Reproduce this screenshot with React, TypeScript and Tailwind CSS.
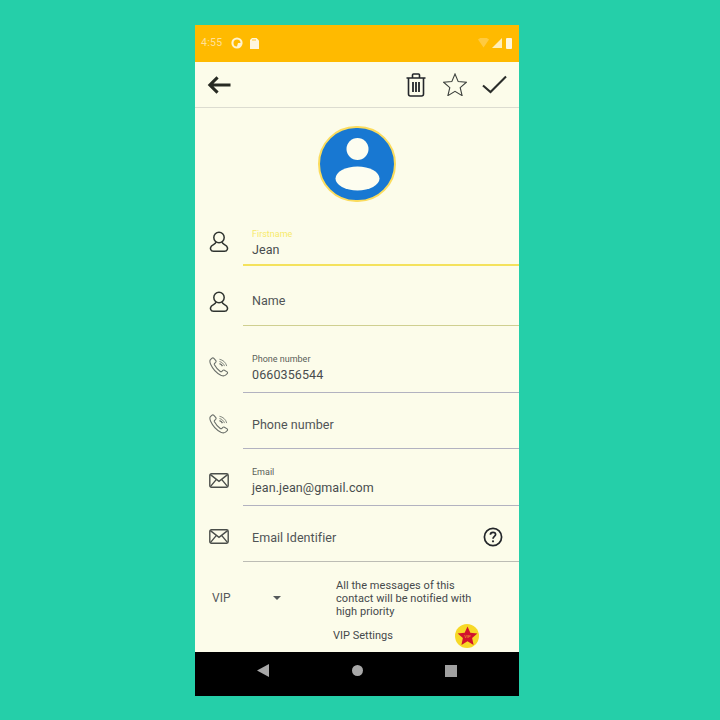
import React from "react";

const Person = () => (
  <svg width="20" height="24" viewBox="0 0 20 24" fill="none" stroke="#2f3430" strokeWidth="1.5">
    <circle cx="10" cy="7.5" r="5.2" />
    <path d="M7 12.2C6.6 14 3.6 14.6 2.3 16.2C0.6 18.4 1.6 21.3 4.5 21.3H15.5C18.4 21.3 19.4 18.4 17.7 16.2C16.4 14.6 13.4 14 13 12.2" />
  </svg>
);

const Phone = () => (
  <svg width="20" height="20" viewBox="0 0 22 22" fill="none" stroke="#6a6f6a" strokeWidth="1.2">
    <path d="M3 1.6L1.4 3.2C0.6 4.4 1 6.2 1.8 8C3.6 12 8 17.6 13 20C15 20.9 17 20.9 18.2 20L20 18.4C20.6 17.7 20.6 17 19.9 16.4L17 14.6C16.3 14.2 15.7 14.3 15.2 14.8L14 16C13.5 16.4 13 16.4 12.4 16C10 14.4 7.4 11.2 6 8.6C5.7 8 5.8 7.5 6.2 7L7.4 5.8C7.9 5.2 7.9 4.6 7.5 4L5.4 1.6C4.7 0.9 3.8 0.9 3 1.6Z" />
    <path d="M11.5 2.5C15.5 3.2 18.5 6 19.5 10" strokeWidth="0.9" />
    <path d="M11.5 5C14.2 5.6 16.2 7.4 17 10" strokeWidth="0.9" />
    <path d="M11.5 7.4C13 7.8 14.2 8.8 14.8 10" strokeWidth="1.4" />
  </svg>
);

const Mail = () => (
  <svg width="20" height="15" viewBox="0 0 20 15" fill="none" stroke="#4a4e4a" strokeWidth="1.4">
    <rect x="0.8" y="0.8" width="18.4" height="13.4" rx="1.6" />
    <path d="M1.4 1.6L10 8.4L18.6 1.6M1.4 13.6L7.4 6.4M18.6 13.6L12.6 6.4" />
  </svg>
);

function Field({
  icon,
  iconPad,
  textPad,
  label,
  value,
  placeholder,
  height,
  line,
  labelClass = "text-[#5a5e58]",
  right,
  lineClass = "h-px",
}: {
  icon: React.ReactNode;
  iconPad: string;
  textPad: string;
  label?: string;
  value?: string;
  placeholder?: string;
  height: string;
  line: string;
  labelClass?: string;
  right?: React.ReactNode;
  lineClass?: string;
}) {
  return (
    <div className={`flex ${height}`}>
      <div className={`w-[48px] flex justify-center items-center ${iconPad}`}>{icon}</div>
      <div className="flex-1 flex flex-col">
        <div className="flex-1 flex items-center pl-[9px] pr-[16px]">
          <div className={`flex-1 ${textPad}`}>
            {label && <div className={`text-[9px] leading-[11px] ${labelClass}`}>{label}</div>}
            {value && <div className="text-[12.5px] leading-[16px] mt-[2px] text-[#484c4e] tracking-[0.1px]">{value}</div>}
            {placeholder && <div className="text-[12.5px] leading-[16px] text-[#505456] tracking-[0.05px]">{placeholder}</div>}
          </div>
          {right}
        </div>
        <div className={`${lineClass} ${line}`} />
      </div>
    </div>
  );
}

export default function App() {
  return (
    <div className="w-[720px] h-[720px] bg-[#25cfa9] pt-[25px] pl-[195px] font-['Roboto',sans-serif]">
      <div className="w-[324px] h-[671px] flex flex-col bg-[#fcfcea]">
        <div className="h-[37px] bg-[#ffba00] flex items-center justify-between pl-[6px] pr-[7px] pb-[1px] shrink-0">
          <div className="flex items-center">
            <span className="text-[10.5px] text-[#ffe09a] tracking-[0.3px] leading-none">4:55</span>
            <svg className="ml-[9px]" width="12" height="12" viewBox="0 0 12 12">
              <circle cx="6" cy="6" r="5.6" fill="#fff3d0" />
              <path d="M6 2.5A3.5 3.5 0 0 0 6 9.5L7 6H9.5A3.5 3.5 0 0 0 6 2.5Z" fill="#ffba00" />
            </svg>
            <svg className="ml-[7px]" width="9" height="11" viewBox="0 0 9 11">
              <path d="M2 0H6.5L9 2.5V11H0V2Z" fill="#fff6dd" />
              <path d="M3 1V3M5 1V3" stroke="#ffba00" strokeWidth="0.8" />
            </svg>
          </div>
          <div className="flex items-center gap-[3px]">
            <svg width="11" height="10" viewBox="0 0 11 10">
              <path d="M0 1.5A8 8 0 0 1 11 1.5L5.5 9.5Z" fill="#ffca40" />
            </svg>
            <svg width="10" height="10" viewBox="0 0 10 10">
              <path d="M10 0V10H0Z" fill="#ffeeb8" />
            </svg>
            <div className="w-[6px] h-[11px] bg-[#fff6dd] rounded-[1px] ml-[1px]" />
          </div>
        </div>

        <div className="h-[45px] flex items-center pl-[12px] pr-[12px] border-b border-[#dcdcd0] box-content shrink-0">
          <svg width="24" height="20" viewBox="0 0 25 20" fill="none" stroke="#272a22" strokeWidth="3.2">
            <path d="M24.5 10H3M11 2L3 10L11 18" />
          </svg>
          <div className="flex-1" />
          <svg width="20" height="24" viewBox="0 0 20 24" fill="none" stroke="#23262a" strokeWidth="1.6">
            <path d="M0.5 5H19.5M2.5 5V21C2.5 22.3 3.3 23 4.5 23H15.5C16.7 23 17.5 22.3 17.5 21V5M6.5 4.5V2C6.5 1.3 7 1 7.5 1H12.5C13 1 13.5 1.3 13.5 2V4.5" />
            <path d="M7 9V19M10 9V19M13 9V19" strokeWidth="1.8" />
          </svg>
          <svg className="ml-[17px]" width="24" height="23" viewBox="0 0 24 23" fill="none" stroke="#3c403c" strokeWidth="1.1">
            <path d="M12 1L15.2 8.6L23.4 9.2L17.2 14.6L19.1 22.6L12 18.3L4.9 22.6L6.8 14.6L0.6 9.2L8.8 8.6Z" />
          </svg>
          <svg className="ml-[15px]" width="25" height="19" viewBox="0 0 25 19" fill="none" stroke="#2a2d2a" strokeWidth="2.1">
            <path d="M1 10.5L8.5 17L24 1.5" />
          </svg>
        </div>

        <div className="h-[100px] flex justify-center pt-[18px] shrink-0">
          <div className="w-[78px] h-[76px] rounded-full bg-[#1878d2] border-[2.5px] border-[#fbdc5e] flex items-center justify-center overflow-hidden">
            <svg width="73" height="71" viewBox="0 0 73 71">
              <circle cx="36.5" cy="20" r="11" fill="#fdfdf0" />
              <ellipse cx="36.5" cy="49.5" rx="22" ry="12" fill="#fdfdf0" />
            </svg>
          </div>
        </div>

        <Field icon={<Person />} iconPad="pt-[10px]" textPad="pt-[14px]" label="Firstname" value="Jean" height="h-[58px]" line="bg-[#f4e25c]" lineClass="h-[2px]" labelClass="text-[#f7ea6a]" />
        <Field icon={<Person />} iconPad="pt-[12px]" textPad="pt-[12px]" placeholder="Name" height="h-[60px]" line="bg-[#cfcf90]" lineClass="h-[1.5px]" />
        <Field icon={<Phone />} iconPad="pt-[14px]" textPad="pt-[19px]" label="Phone number" value="0660356544" height="h-[67px]" line="bg-[#b2b2c0]" />
        <Field icon={<Phone />} iconPad="pt-[6px]" textPad="pt-[8px]" placeholder="Phone number" height="h-[56px]" line="bg-[#b2b2c0]" />
        <Field icon={<Mail />} iconPad="pt-[6px]" textPad="pt-[9px]" label="Email" value="jean.jean@gmail.com" height="h-[57px]" line="bg-[#b2b2c0]" />
        <Field
          icon={<Mail />}
          iconPad="pt-[4px]"
          textPad="pt-[8px]"
          placeholder="Email Identifier"
          height="h-[56px]"
          line="bg-[#bcbcb4]"
          right={
            <svg className="mt-[6px]" width="20" height="20" viewBox="0 0 20 20" fill="none">
              <circle cx="10" cy="10" r="8.6" stroke="#23262a" strokeWidth="1.7" />
              <path d="M7.4 7.8C7.4 6.2 8.6 5.4 10 5.4C11.5 5.4 12.6 6.3 12.6 7.6C12.6 9.4 10 9.6 10 11.8" stroke="#23262a" strokeWidth="1.7" />
              <circle cx="10" cy="14.3" r="1.1" fill="#23262a" />
            </svg>
          }
        />

        <div className="flex-1 flex flex-col min-h-0">
          <div className="flex items-center h-[62px] pt-[10px]">
            <div className="w-[48px] pl-[17px] text-[12px] text-[#54585a]">VIP</div>
            <div className="w-[93px] flex justify-start pl-[30px]">
              <div className="w-0 h-0 border-l-[4px] border-r-[4px] border-t-[4px] border-l-transparent border-r-transparent border-t-[#55595a]" />
            </div>
            <div className="w-[150px] text-[11px] leading-[13px] text-[#45494a] tracking-[0.05px]">
              All the messages of this<br />contact will be notified with<br />high priority
            </div>
          </div>
          <div className="flex-1 flex items-start relative">
            <div className="ml-[138px] mt-[5px] text-[11px] leading-[13px] text-[#45494a]">VIP Settings</div>
            <div className="absolute left-[260px] top-0 w-[24px] h-[24px] rounded-full bg-[#f7d927] flex items-center justify-center">
              <svg width="21" height="20" viewBox="0 0 20 19">
                <path d="M10 0.5L12.7 6.4L19.4 7.1L14.4 11.4L15.8 18L10 14.6L4.2 18L5.6 11.4L0.6 7.1L7.3 6.4Z" fill="#d2122d" />
                <text x="10" y="11.5" textAnchor="middle" fontSize="4" fill="#f2b02a" fontFamily="Roboto">VIP</text>
              </svg>
            </div>
          </div>
        </div>

        <div className="h-[44px] bg-black flex items-center pb-[7px] shrink-0">
          <svg className="ml-[62px]" width="12" height="13" viewBox="0 0 12 13">
            <path d="M12 0V13L0 6.5Z" fill="#a8a8a8" />
          </svg>
          <div className="ml-[83px] w-[11px] h-[11px] rounded-full bg-[#a8a8a8]" />
          <div className="ml-[82px] w-[12px] h-[12px] bg-[#a0a0a0]" />
        </div>
      </div>
    </div>
  );
}
